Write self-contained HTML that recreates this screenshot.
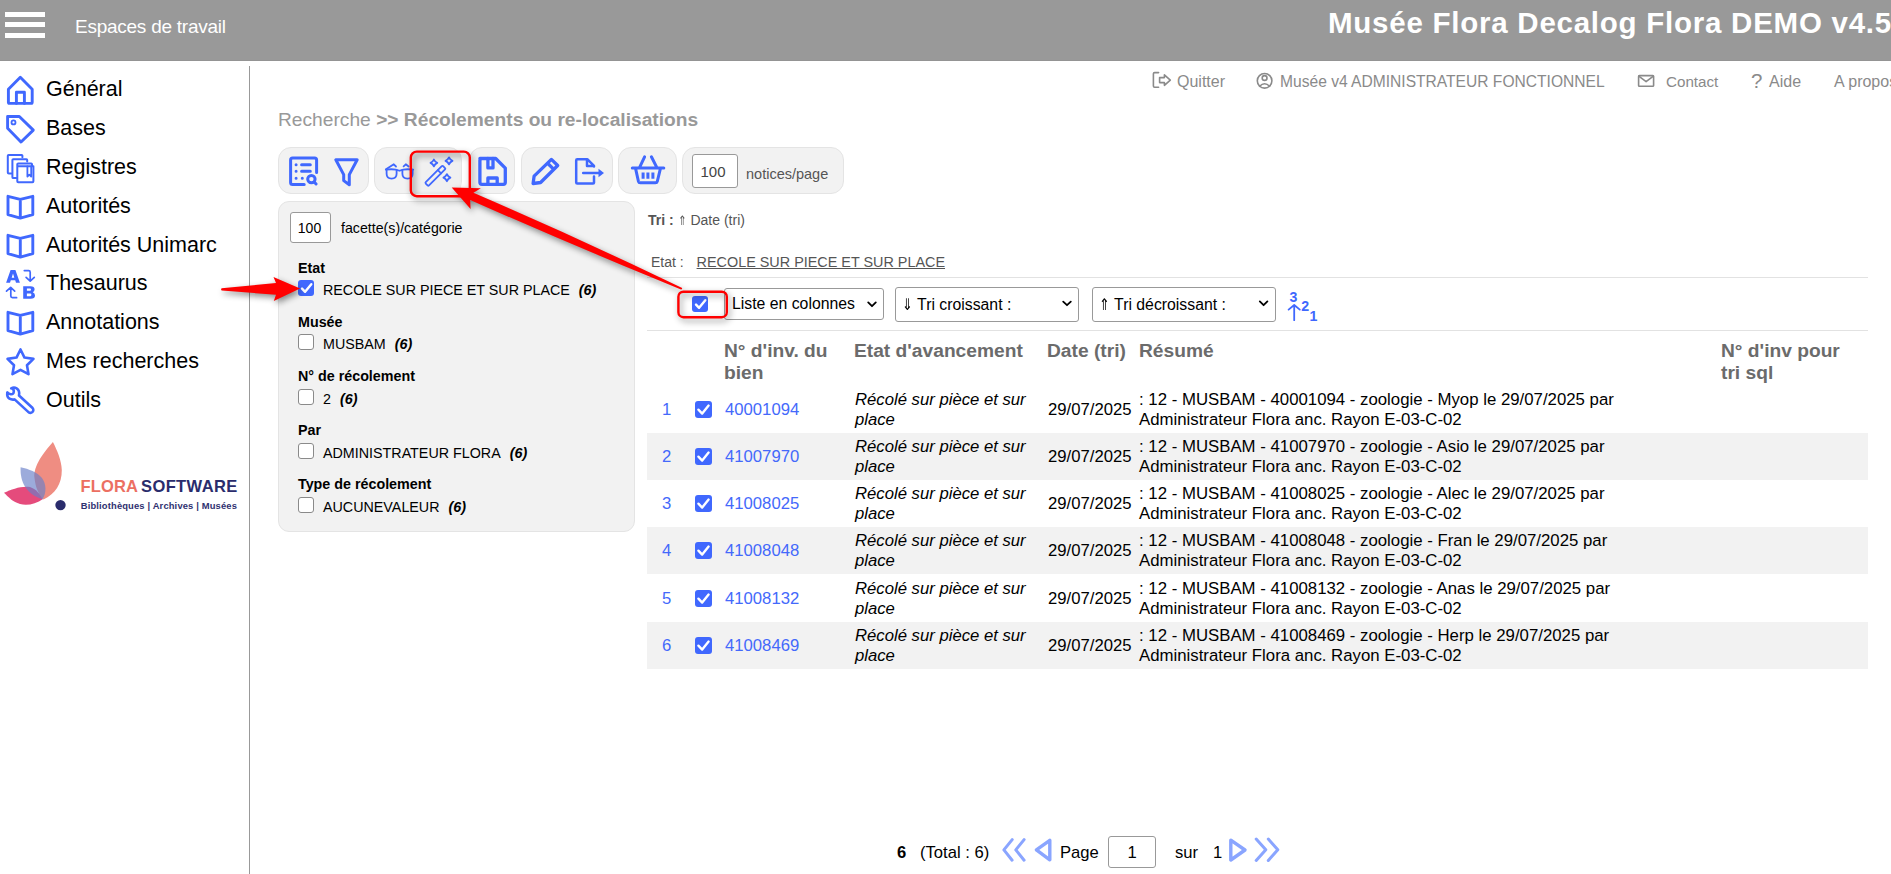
<!DOCTYPE html>
<html><head><meta charset="utf-8">
<style>
*{box-sizing:border-box;margin:0;padding:0}
html,body{width:1891px;height:874px;overflow:hidden;background:#fff;font-family:"Liberation Sans",sans-serif;color:#000}
.a{position:absolute;white-space:nowrap}
svg.a{overflow:visible}
#hdr{position:absolute;left:0;top:0;width:1891px;height:61px;background:#999;border-bottom:1px solid #949494}
.hb{position:absolute;left:5px;width:40px;height:5px;background:#fff}
#esp{left:75px;top:16px;font-size:19px;letter-spacing:-0.25px;color:#fff}
#title{left:1328px;top:6px;font-size:29.5px;font-weight:bold;color:#fff;letter-spacing:0.75px}
#vline{position:absolute;left:249px;top:66px;width:1px;height:808px;background:#999}
.mi{position:absolute;left:46px;font-size:21.5px;line-height:24px;white-space:nowrap}
.ic{fill:none;stroke:#4068fe;stroke-linecap:round;stroke-linejoin:round}
.tl{font-size:16px;color:#8a8a8a;line-height:20px}
.grp{position:absolute;top:147px;height:47px;background:#f2f2f2;border:1px solid #e4e4e4;border-radius:13px}
.inp{position:absolute;background:#fff;border:1px solid #999;border-radius:3px;text-align:center}
.cbx{position:absolute;width:16px;height:16px;border-radius:3px;background:#4068fe}
.cbu{position:absolute;width:16px;height:16px;border-radius:3px;background:#fff;border:1px solid #8a8a8a}
.fh{position:absolute;left:298px;font-size:14.3px;font-weight:bold;line-height:16px}
.fl{position:absolute;left:323px;font-size:14.3px;line-height:16px;white-space:nowrap}
.fl i{font-weight:bold;margin-left:9px}
.sel{position:absolute;background:#fff;border:1px solid #999;border-radius:3px;font-size:15.8px;line-height:18px;white-space:nowrap}
.th{position:absolute;font-size:19.2px;font-weight:bold;color:#6b6b6b;line-height:22px}
.row{position:absolute;left:647px;width:1221px;height:47px}
.row.g{background:#f2f2f2}
.cell{position:absolute;font-size:16.7px;line-height:20px;white-space:nowrap}
.lnk{color:#4469fb}
</style></head><body>
<div id="hdr">
  <div class="hb" style="top:12px"></div>
  <div class="hb" style="top:22px"></div>
  <div class="hb" style="top:33px"></div>
  <div id="esp" class="a">Espaces de travail</div>
  <div id="title" class="a">Musée Flora Decalog Flora DEMO v4.5</div>
</div>
<div id="vline"></div>

<!-- sidebar -->
<div class="mi" style="top:77px">Général</div>
<div class="mi" style="top:116px">Bases</div>
<div class="mi" style="top:155px">Registres</div>
<div class="mi" style="top:194px">Autorités</div>
<div class="mi" style="top:233px">Autorités Unimarc</div>
<div class="mi" style="top:271px">Thesaurus</div>
<div class="mi" style="top:310px">Annotations</div>
<div class="mi" style="top:349px">Mes recherches</div>
<div class="mi" style="top:388px">Outils</div>

<!-- top links -->
<div class="a tl" style="left:1177px;top:72px">Quitter</div>
<div class="a tl" style="left:1280px;top:72px;font-size:15.6px">Musée v4 ADMINISTRATEUR FONCTIONNEL</div>
<div class="a tl" style="left:1666px;top:72px;font-size:15.2px">Contact</div>
<div class="a tl" style="left:1769px;top:72px">Aide</div>
<div class="a tl" style="left:1834px;top:72px">A propos</div>

<!-- breadcrumb -->
<div class="a" style="left:278px;top:110px;font-size:19.2px;color:#999;line-height:20px">Recherche <b>&gt;&gt; Récolements ou re-localisations</b></div>

<!-- toolbar groups -->
<div class="grp" style="left:278px;width:91px"></div>
<div class="grp" style="left:374px;width:88px"></div>
<div class="grp" style="left:469px;width:46px"></div>
<div class="a" style="left:412px;top:153px;width:49px;height:41px;background:#f0f0f0;box-shadow:inset 4px 4px 7px rgba(0,0,0,0.075);border-radius:2px"></div>
<div class="grp" style="left:521px;width:92px"></div>
<div class="grp" style="left:618px;width:59px"></div>
<div class="grp" style="left:682px;width:162px"></div>
<div class="inp" style="left:692px;top:154px;width:46px;height:34px;font-size:15px;line-height:34px;color:#444;text-indent:-4px">100</div>
<div class="a" style="left:746px;top:165.5px;font-size:14.5px;color:#555;line-height:16px">notices/page</div>

<!-- facet panel -->
<div class="a" style="left:278px;top:201px;width:357px;height:331px;background:#f2f2f2;border:1px solid #e4e4e4;border-radius:11px"></div>
<div class="inp" style="left:290px;top:212px;width:41px;height:31px;font-size:14px;line-height:31px;text-indent:-2px">100</div>
<div class="a" style="left:341px;top:220px;font-size:14.2px;line-height:16px">facette(s)/catégorie</div>

<div class="fh" style="top:260px">Etat</div>
<div class="cbx" style="left:298px;top:280px"><svg width="16" height="16" style="position:absolute;left:0;top:0"><path d="M4 8.6L7.1 11.8L13.3 4.2" fill="none" stroke="#fff" stroke-width="2.4" stroke-linecap="round" stroke-linejoin="round"/></svg></div>
<div class="fl" style="top:282px">RECOLE SUR PIECE ET SUR PLACE<i>(6)</i></div>
<div class="fh" style="top:314px">Musée</div>
<div class="cbu" style="left:298px;top:334px"></div>
<div class="fl" style="top:336px">MUSBAM<i>(6)</i></div>
<div class="fh" style="top:368px">N° de récolement</div>
<div class="cbu" style="left:298px;top:389px"></div>
<div class="fl" style="top:391px">2<i>(6)</i></div>
<div class="fh" style="top:422px">Par</div>
<div class="cbu" style="left:298px;top:443px"></div>
<div class="fl" style="top:445px">ADMINISTRATEUR FLORA<i>(6)</i></div>
<div class="fh" style="top:476px">Type de récolement</div>
<div class="cbu" style="left:298px;top:497px"></div>
<div class="fl" style="top:499px">AUCUNEVALEUR<i>(6)</i></div>

<!-- right area -->
<div class="a" style="left:648px;top:212px;font-size:14px;color:#555;line-height:16px"><b>Tri :</b> <span style="font-size:12.5px;display:inline-block;transform:scaleX(0.8);margin:0 -1px">&#8657;</span> Date (tri)</div>
<div class="a" style="left:651px;top:254px;font-size:14px;color:#555;line-height:16px">Etat : <span style="margin-left:9px;text-decoration:underline;font-size:14.4px">RECOLE SUR PIECE ET SUR PLACE</span></div>
<div class="a" style="left:647px;top:277px;width:1221px;height:1px;background:#e2e2e2"></div>
<div class="a" style="left:647px;top:330px;width:1221px;height:1px;background:#e2e2e2"></div>

<div class="cbx" style="left:692px;top:296px"><svg width="16" height="16" style="position:absolute;left:0;top:0"><path d="M4 8.6L7.1 11.8L13.3 4.2" fill="none" stroke="#fff" stroke-width="2.4" stroke-linecap="round" stroke-linejoin="round"/></svg></div>
<div class="sel" style="left:724px;top:288px;width:160px;height:32px;padding:6px 0 0 7px">Liste en colonnes</div>
<div class="sel" style="left:895px;top:287px;width:184px;height:35px;padding:8px 0 0 5px"><span style="display:inline-block;transform:scaleX(0.8);margin-right:-1px">&#8659;</span> Tri croissant :</div>
<div class="sel" style="left:1092px;top:287px;width:184px;height:35px;padding:8px 0 0 5px"><span style="display:inline-block;transform:scaleX(0.8);margin-right:-1px">&#8657;</span> Tri décroissant :</div>

<!-- table header -->
<div class="th" style="left:724px;top:340px">N° d'inv. du<br>bien</div>
<div class="th" style="left:854px;top:340px">Etat d'avancement</div>
<div class="th" style="left:1047px;top:340px">Date (tri)</div>
<div class="th" style="left:1139px;top:340px">Résumé</div>
<div class="th" style="left:1721px;top:340px">N° d'inv pour<br>tri sql</div>

<div id="rows">
<div class="row" style="top:386px"></div>
<div class="cell lnk" style="left:662px;top:400px">1</div>
<div class="cbx" style="left:695px;top:401px;width:17px;height:17px"><svg width="17" height="17" style="position:absolute;left:0;top:0"><path d="M3.4 8.7L7.2 12.6L13.6 4.6" fill="none" stroke="#fff" stroke-width="2.4" stroke-linecap="round" stroke-linejoin="round"/></svg></div>
<div class="cell lnk" style="left:725px;top:400px">40001094</div>
<div class="cell" style="left:855px;top:390px;font-style:italic">Récolé sur pièce et sur<br>place</div>
<div class="cell" style="left:1048px;top:400px">29/07/2025</div>
<div class="cell" style="font-size:16.8px;left:1139px;top:390px">: 12 - MUSBAM - 40001094 - zoologie - Myop le 29/07/2025 par<br>Administrateur Flora anc. Rayon E-03-C-02</div>
<div class="row g" style="top:433.15px"></div>
<div class="cell lnk" style="left:662px;top:447.15px">2</div>
<div class="cbx" style="left:695px;top:448.15px;width:17px;height:17px"><svg width="17" height="17" style="position:absolute;left:0;top:0"><path d="M3.4 8.7L7.2 12.6L13.6 4.6" fill="none" stroke="#fff" stroke-width="2.4" stroke-linecap="round" stroke-linejoin="round"/></svg></div>
<div class="cell lnk" style="left:725px;top:447.15px">41007970</div>
<div class="cell" style="left:855px;top:437.15px;font-style:italic">Récolé sur pièce et sur<br>place</div>
<div class="cell" style="left:1048px;top:447.15px">29/07/2025</div>
<div class="cell" style="font-size:16.8px;left:1139px;top:437.15px">: 12 - MUSBAM - 41007970 - zoologie - Asio le 29/07/2025 par<br>Administrateur Flora anc. Rayon E-03-C-02</div>
<div class="row" style="top:480.3px"></div>
<div class="cell lnk" style="left:662px;top:494.3px">3</div>
<div class="cbx" style="left:695px;top:495.3px;width:17px;height:17px"><svg width="17" height="17" style="position:absolute;left:0;top:0"><path d="M3.4 8.7L7.2 12.6L13.6 4.6" fill="none" stroke="#fff" stroke-width="2.4" stroke-linecap="round" stroke-linejoin="round"/></svg></div>
<div class="cell lnk" style="left:725px;top:494.3px">41008025</div>
<div class="cell" style="left:855px;top:484.3px;font-style:italic">Récolé sur pièce et sur<br>place</div>
<div class="cell" style="left:1048px;top:494.3px">29/07/2025</div>
<div class="cell" style="font-size:16.8px;left:1139px;top:484.3px">: 12 - MUSBAM - 41008025 - zoologie - Alec le 29/07/2025 par<br>Administrateur Flora anc. Rayon E-03-C-02</div>
<div class="row g" style="top:527.45px"></div>
<div class="cell lnk" style="left:662px;top:541.45px">4</div>
<div class="cbx" style="left:695px;top:542.45px;width:17px;height:17px"><svg width="17" height="17" style="position:absolute;left:0;top:0"><path d="M3.4 8.7L7.2 12.6L13.6 4.6" fill="none" stroke="#fff" stroke-width="2.4" stroke-linecap="round" stroke-linejoin="round"/></svg></div>
<div class="cell lnk" style="left:725px;top:541.45px">41008048</div>
<div class="cell" style="left:855px;top:531.45px;font-style:italic">Récolé sur pièce et sur<br>place</div>
<div class="cell" style="left:1048px;top:541.45px">29/07/2025</div>
<div class="cell" style="font-size:16.8px;left:1139px;top:531.45px">: 12 - MUSBAM - 41008048 - zoologie - Fran le 29/07/2025 par<br>Administrateur Flora anc. Rayon E-03-C-02</div>
<div class="row" style="top:574.6px"></div>
<div class="cell lnk" style="left:662px;top:588.6px">5</div>
<div class="cbx" style="left:695px;top:589.6px;width:17px;height:17px"><svg width="17" height="17" style="position:absolute;left:0;top:0"><path d="M3.4 8.7L7.2 12.6L13.6 4.6" fill="none" stroke="#fff" stroke-width="2.4" stroke-linecap="round" stroke-linejoin="round"/></svg></div>
<div class="cell lnk" style="left:725px;top:588.6px">41008132</div>
<div class="cell" style="left:855px;top:578.6px;font-style:italic">Récolé sur pièce et sur<br>place</div>
<div class="cell" style="left:1048px;top:588.6px">29/07/2025</div>
<div class="cell" style="font-size:16.8px;left:1139px;top:578.6px">: 12 - MUSBAM - 41008132 - zoologie - Anas le 29/07/2025 par<br>Administrateur Flora anc. Rayon E-03-C-02</div>
<div class="row g" style="top:621.75px"></div>
<div class="cell lnk" style="left:662px;top:635.75px">6</div>
<div class="cbx" style="left:695px;top:636.75px;width:17px;height:17px"><svg width="17" height="17" style="position:absolute;left:0;top:0"><path d="M3.4 8.7L7.2 12.6L13.6 4.6" fill="none" stroke="#fff" stroke-width="2.4" stroke-linecap="round" stroke-linejoin="round"/></svg></div>
<div class="cell lnk" style="left:725px;top:635.75px">41008469</div>
<div class="cell" style="left:855px;top:625.75px;font-style:italic">Récolé sur pièce et sur<br>place</div>
<div class="cell" style="left:1048px;top:635.75px">29/07/2025</div>
<div class="cell" style="font-size:16.8px;left:1139px;top:625.75px">: 12 - MUSBAM - 41008469 - zoologie - Herp le 29/07/2025 par<br>Administrateur Flora anc. Rayon E-03-C-02</div>
</div>

<!-- pagination -->
<div class="a" style="left:897px;top:844px;font-size:16.6px;line-height:18px"><b>6</b></div>
<div class="a" style="left:920px;top:844px;font-size:16.6px;line-height:18px">(Total : 6)</div>
<div class="a" style="left:1060px;top:844px;font-size:16.6px;line-height:18px">Page</div>
<div class="inp" style="left:1108px;top:836px;width:48px;height:32px;font-size:16.6px;line-height:32px">1</div>
<div class="a" style="left:1175px;top:844px;font-size:16.6px;line-height:18px">sur</div>
<div class="a" style="left:1213px;top:844px;font-size:16.6px;line-height:18px">1</div>


<!-- ICONS -->
<svg class="a" style="left:0;top:0" width="1891" height="874" viewBox="0 0 1891 874">
<g class="ic" stroke-width="2.9">
  <!-- home -->
  <path d="M8.4 102.5V89.2L20.3 77.3L32.2 89.2V102.3Q32.2 103.4 31.1 103.4H9.5Q8.4 103.4 8.4 102.3Z"/>
  <path d="M16.4 103.4V92.3H24.4V103.4"/>
  <!-- tag -->
  <path d="M7.6 116.5H19.3L33.3 130.1L21 142L7.6 128.3Z"/>
  <circle cx="13.5" cy="122.4" r="2" stroke-width="1.8"/>
  <!-- books -->
  <path d="M8 196.3L20.3 199.4L32.8 196.3V214.6L20.3 218.1L8 214.6Z M20.3 199.4V218"/>
  <path d="M8 235.3L20.3 238.4L32.8 235.3V253.6L20.3 257.1L8 253.6Z M20.3 238.4V257"/>
  <path d="M8 312.3L20.3 315.4L32.8 312.3V330.6L20.3 334.1L8 330.6Z M20.3 315.4V334"/>
  <!-- star -->
  <path transform="translate(4.9 346.85) scale(1.3)" stroke-width="2" d="M12 17.75l-6.172 3.245l1.179 -6.873l-5 -4.867l6.9 -1l3.086 -6.253l3.086 6.253l6.9 1l-5 4.867l1.179 6.873z"/>
  <!-- wrench -->
  <path stroke-width="2.6" d="M11.2 388.3Q13.8 388.8 13.8 391.2Q13.8 394.4 10.8 394.2Q8.6 394 7.3 392.4Q6.7 397 9.4 398.6Q11.8 400 14.6 399.4L28.2 411.9A2.8 2.8 0 0 0 32.6 408L19 395.5Q20 390.5 16.6 388.3Q14 386.8 11.2 388.3Z"/>
  <!-- thesaurus arrows -->
  <path stroke-width="1.7" d="M24.3 270.6H28.6Q30.2 270.6 30.2 272.2V280.8M26.1 277.3L30.2 281.1L34.3 277.3"/>
  <path stroke-width="1.7" d="M16.6 297.7H12.4Q10.8 297.7 10.8 296.1V287.6M6.5 291.1L10.7 287.4L14.7 291.1"/>
</g>
<g class="ic" stroke-width="2">
  <!-- registres -->
  <path d="M22.4 157.2V155.6Q22.4 154.9 21.7 154.9H8.6Q7.8 154.9 7.8 155.7V172.6Q7.8 173.6 8.8 173.6H11.4"/>
  <path d="M27.2 161.6V160Q27.2 159.2 26.4 159.2H13.3Q12.4 159.2 12.4 160V177.2Q12.4 178.1 13.4 178.1H16.4"/>
  <path d="M17.3 166.3H33.4V181.3Q33.4 182.2 32.5 182.2H18.2Q17.3 182.2 17.3 181.3V164.2Q17.3 163.4 18.1 163.4H31.2Q32 163.4 32 164.2V166.3"/>
  <path stroke-width="1.8" d="M27.4 166.5V176.5L29.3 174.6L31.2 176.5V166.5"/>
</g>
<path fill="#4068fe" fill-rule="evenodd" d="M6.1 282.7L10.6 269.9H15.4L19.9 282.7H16L15.2 280.3H10.8L10 282.7ZM11.7 277.7H14.3L13 273.6Z"/>
<path fill="#4068fe" fill-rule="evenodd" d="M23.2 286.2H30.5Q34.6 286.2 34.6 289.3Q34.6 291.3 32.8 292.2Q35 293 35 295.5Q35 298.7 30.8 298.7H23.2ZM26.9 288.5H30Q31 288.5 31 289.6Q31 290.8 30 290.8H26.9ZM26.9 293.4H30.3Q31.4 293.4 31.4 294.85Q31.4 296.3 30.3 296.3H26.9Z"/>

<!-- toolbar icons -->
<g class="ic" stroke-width="3">
  <path d="M304.2 184.6H292.6Q290.6 184.6 290.6 182.6V160.1Q290.6 158.1 292.6 158.1H314.6Q316.6 158.1 316.6 160.1V172.4"/>
  <path d="M296.1 164.7V164.7M296.1 171.2V171.2M296.1 178.2V178.2M301.6 164.7H310.3M301.6 171.2H310.3M302.3 178.2V178.2"/>
  <circle cx="311.4" cy="179.1" r="3.7"/>
  <path d="M314.4 182.2L316.1 184"/>
  <path d="M335.8 159.8H357.2L349.3 174.6V184.8L343.7 180.6V174.6Z"/>
  <path stroke-width="3.3" d="M479.9 158.5H495.7L505.3 168.1V182.3Q505.3 184.3 503.3 184.3H481.9Q479.9 184.3 479.9 182.3V160.5Q479.9 158.5 481.9 158.5"/>
  <path stroke-width="3.3" d="M487.9 158.5V167.9H493V158.5M487.9 184.3V178H497.2V184.3"/>
  <path stroke-width="3.3" d="M551.4 159.4L557.7 165.5L540.6 182.5L533.1 183.5L534.1 176.1ZM547.6 163.3L553.8 169.4"/>
  <path d="M632.3 168H663.8M644.6 156.8L639.6 167.4M651.4 156.8L656.8 167.4M635.6 168.6L638.4 181.3Q638.8 182.8 640.3 182.8H655.4Q656.9 182.8 657.3 181.3L660.4 168.6"/><path stroke-linecap="butt" d="M643.1 172.4V178.8M647.9 172.4V178.8M652.9 172.4V178.8"/>
</g>
<g class="ic" stroke-width="2.5">
  <path d="M594 176.6V182.7Q594 183.6 593 183.6H577.2Q576.2 183.6 576.2 182.6V160.2Q576.2 159.2 577.2 159.2H587.3L594 165.9V166.4M587 159.3V166.1H593.8"/>
  <path d="M583.2 172.9H599.5"/>
</g>
<path d="M598.5 168.8L604 172.9L598.5 177.2Z" fill="#4068fe"/>
<g class="ic" stroke-width="1.8">
  <path d="M385.8 169.7C392 168.8 396 169.2 399.5 170.8C403 169.2 407 168.8 413.2 169.7"/>
  <path d="M386.6 169.6V173.8Q386.6 178.6 391.6 178.6Q396.6 178.6 396.6 173.8V169.8M402.4 169.8V173.8Q402.4 178.6 407.6 178.6Q412.6 178.6 412.6 173.8V169.6"/>
  <path d="M386 169.3L393.8 164.3L396 166.5M403.6 166.4L405.8 164.3L408.6 166.5"/>
  <rect x="-12.6" y="-2.3" width="24.6" height="4.6" rx="1" transform="translate(435.6 175.6) rotate(-45)"/>
  <path d="M5.5 -2.3V2.3" transform="translate(435.6 175.6) rotate(-45)"/>
  <path d="M433.9 159.5Q434.92 161.88 437.29999999999995 162.9Q434.92 163.92 433.9 166.3Q432.88 163.92 430.5 162.9Q432.88 161.88 433.9 159.5Z"/>
  <path d="M449 157.4Q450.05 159.85 452.5 160.9Q450.05 161.95 449 164.4Q447.95 161.95 445.5 160.9Q447.95 159.85 449 157.4Z"/>
  <path d="M446.9 174.2Q447.95 176.65 450.4 177.7Q447.95 178.75 446.9 181.2Q445.85 178.75 443.4 177.7Q445.85 176.65 446.9 174.2Z"/>
</g>
<!-- sort numeric icon -->
<g class="ic" stroke-width="1.8">
  <path d="M1294.2 320.2V305M1288.6 309.6L1294.2 305L1299.8 309.6"/>
</g>
<text x="1289.5" y="301.8" font-family="Liberation Sans" font-weight="bold" font-size="14.2" fill="#4068fe">3</text>
<text x="1301.2" y="311.1" font-family="Liberation Sans" font-weight="bold" font-size="14.2" fill="#4068fe">2</text>
<text x="1309.6" y="320.7" font-family="Liberation Sans" font-weight="bold" font-size="14.2" fill="#4068fe">1</text>
</svg>

<!-- chevrons -->
<svg class="a" style="left:0;top:0" width="1891" height="874">
<g fill="none" stroke="#000" stroke-width="1.8" stroke-linecap="round" stroke-linejoin="round">
<path d="M868.2 302.4L872 306.2L875.8 302.4"/>
<path d="M1063.2 301.6L1067 305.2L1070.8 301.6"/>
<path d="M1259.8 301.4L1263.6 305.2L1267.4 301.4"/>
</g>
</svg>
<!-- annotations -->
<svg class="a" style="left:0;top:0;filter:drop-shadow(2px 3px 3px rgba(0,0,0,0.45))" width="1891" height="874">
<g fill="none" stroke="#ff0000" stroke-width="2.4">
<rect x="410.8" y="151.6" width="59" height="44.6" rx="6"/>
<rect x="678.4" y="291.7" width="48.4" height="25.5" rx="5"/>
</g>
<path fill="#ff0000" d="M451.7 187.5L480.9 188.3L473.4 192.8Q579 238.2 682.2 288Q682.2 289.6 681 289.4Q575 246.4 470.2 200L470.6 208.9Z"/>
<path fill="#ff0000" d="M221.7 288.2L276 283.1L273.5 277.1L300.1 288.5L273.8 300.9L276 294.8L221.7 290.6Q220.5 289.4 221.7 288.2Z"/>
</svg>

<!-- top link icons -->
<svg class="a" style="left:0;top:0" width="1891" height="874">
<g fill="none" stroke="#8a8a8a" stroke-width="1.6" stroke-linejoin="round" stroke-linecap="round">
  <path d="M1158.6 72.6H1154.6Q1153.4 72.6 1153.4 73.8V86Q1153.4 87.2 1154.6 87.2H1158.6"/>
  <path d="M1159.6 77.6H1164.4V74.9L1170.3 80.1L1164.4 85.3V82.6H1159.6Z"/>
  <circle cx="1264.6" cy="80.8" r="7.3"/>
  <circle cx="1264.6" cy="78" r="2.4"/>
  <path d="M1259.6 86.3Q1264.6 81.2 1269.6 86.3"/>
  <rect x="1638.6" y="75.6" width="15" height="10.6" rx="0.8"/>
  <path d="M1638.8 76.2L1646.1 81.6L1653.4 76.2"/>
</g>
<text x="1751" y="88" font-family="Liberation Sans" font-size="20.5" fill="#8a8a8a">?</text>
<!-- pagination icons -->
<g fill="none" stroke="#8aa5ff" stroke-width="3" stroke-linejoin="round" stroke-linecap="round">
  <path d="M1012.2 839.6L1003.9 849.9L1012.1 860.2M1024.1 839.6L1015.8 849.9L1024.1 860.2"/>
  <path stroke-width="3.4" d="M1049.8 840.3L1036.4 849.9L1049.8 859.8Z"/>
  <path stroke-width="3.4" d="M1230.8 840.2L1245 850L1230.8 860Z"/>
  <path d="M1256.2 839L1265.8 849.7L1256.2 860.5M1268.3 839L1277.8 849.7L1268.3 860.5"/>
</g>
<!-- logo -->
<path fill="rgba(226,55,110,0.9)" d="M4 492.8C12 489 22 485.5 30 487C36 489 40 494 43 499C36 504 27 506 20 504C13 502 8 497 4 492.8Z"/>
<path fill="rgba(237,125,113,0.88)" d="M52.9 441.9C44 452 33 466 34.5 478C35.5 488 39 495 43.5 499.5C55 494 62 484 61.8 470C61.5 460 57 450 52.9 441.9Z"/>
<path fill="rgba(105,128,200,0.66)" d="M20.6 467.2C20 482 26 494 42.5 499.3C46.5 493 46.5 484 42 478C37 472 29 469 20.6 467.2Z"/>
<circle cx="60.5" cy="505.1" r="5.2" fill="#2a2c6c"/>
<text x="80.5" y="491.9" font-family="Liberation Sans" font-weight="bold" font-size="16.5" fill="#ec6f62" letter-spacing="0.15">FLORA</text>
<text x="141" y="491.9" font-family="Liberation Sans" font-weight="bold" font-size="16.5" fill="#2a2c6c" letter-spacing="0.4">SOFTWARE</text>
<text x="80.8" y="508.7" font-family="Liberation Sans" font-weight="bold" font-size="9.4" fill="#2f3170" letter-spacing="0.15">Bibliothèques | Archives | Musées</text>
</svg>
</body></html>
